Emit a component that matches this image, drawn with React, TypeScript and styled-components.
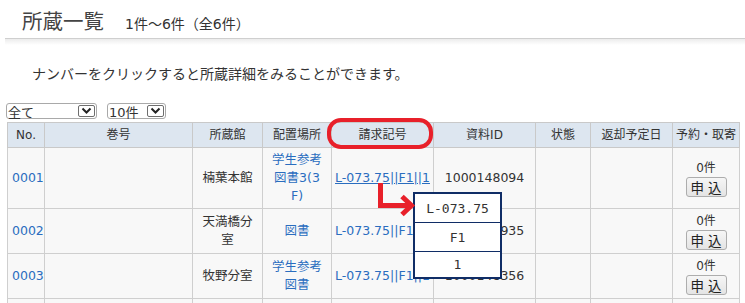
import React from 'react';
import styled, { createGlobalStyle } from 'styled-components';

const GlobalStyle = createGlobalStyle`
  html, body {
    margin: 0;
    padding: 0;
    background: #fff;
    overflow: hidden;
  }
  body {
    font-family: "DejaVu Sans", "Noto Sans CJK JP", sans-serif;
    color: #333;
  }
`;

const Page = styled.div`
  position: relative;
  width: 745px;
  height: 303px;
  overflow: hidden;
`;

const TitleBar = styled.header`
  position: relative;
  margin-left: 5px;
  height: 39px;
  padding: 7px 0 0 17px;
  border-bottom: 1px solid #cfcfcf;
  display: flex;
  align-items: baseline;
  gap: 21px;
  box-sizing: border-box;

  &::after {
    content: '';
    position: absolute;
    left: 0;
    right: 0;
    top: 39px;
    height: 6px;
    background: linear-gradient(#ececec, #fff);
  }
`;

const Title = styled.h1`
  margin: 0;
  font-family: "Noto Sans CJK JP", sans-serif;
  font-size: 20.5px;
  font-weight: 400;
  line-height: 26px;
  color: #444;
`;

const Count = styled.span`
  font-size: 14px;
  color: #333;
`;

const Note = styled.p`
  margin: 25px 0 0 32px;
  font-size: 14px;
  line-height: 20px;
`;

const Controls = styled.div`
  display: flex;
  gap: 10px;
  margin: 19px 0 0 6px;
  height: 16px;
`;

const SelectBox = styled.div<{ $w: number }>`
  width: ${(p) => p.$w}px;
  height: 16px;
  box-sizing: border-box;
  border: 1px solid #a9a9a9;
  border-radius: 3px;
  display: flex;
  align-items: center;
  justify-content: space-between;
  font-size: 13px;
  padding-left: 1px;
  background: #fff;
`;

const SelectArrow = styled.span`
  width: 17px;
  height: 12px;
  box-sizing: border-box;
  margin-right: 1px;
  border: 1px solid #6e6e6e;
  border-radius: 2px;
  display: flex;
  align-items: center;
  justify-content: center;
`;

const TableWrap = styled.div`
  margin: 3px 0 0 7px;
`;

const Table = styled.table`
  border-collapse: collapse;
  table-layout: fixed;
  width: 732px;
  font-size: 12.5px;
`;

const Th = styled.th`
  background: #dde6f0;
  border: 1px solid #c9c9c9;
  font-weight: 400;
  font-size: 12px;
  line-height: 18px;
  padding: 3px 2px;
  color: #333;
  white-space: nowrap;
`;

const Td = styled.td<{ $align?: string; $px?: number }>`
  background: #f8f8f8;
  border: 1px solid #cfcfcf;
  line-height: 18px;
  padding: 3px ${(p) => p.$px ?? 4}px;
  text-align: ${(p) => p.$align || 'center'};
  vertical-align: middle;
  word-break: break-all;
`;

const Link = styled.a<{ $under?: boolean }>`
  color: #2a6dbf;
  text-decoration: ${(p) => (p.$under ? 'underline' : 'none')};
  white-space: nowrap;
`;

const WrapLink = styled.a`
  color: #2a6dbf;
  text-decoration: none;
`;

const Reserve = styled.div`
  display: flex;
  flex-direction: column;
  align-items: center;
`;

const ReserveCount = styled.span`
  line-height: 18px;
  font-size: 12px;
`;

const ReserveButton = styled.button`
  width: 41px;
  height: 20px;
  padding: 0 0 0 4px;
  border: 1px solid #adadad;
  border-radius: 3px;
  background: linear-gradient(#f6f6f6, #e4e4e4);
  font-family: "Noto Sans CJK JP", sans-serif;
  font-size: 13.5px;
  line-height: 18px;
  letter-spacing: 4px;
  color: #222;
`;

const Popup = styled.div`
  position: absolute;
  left: 413px;
  top: 192px;
  width: 89px;
  box-sizing: border-box;
  border: 2px solid #102d66;
  background: #fff;
  display: flex;
  flex-direction: column;
`;

const PopupRow = styled.div<{ $h: number }>`
  height: ${(p) => p.$h}px;
  display: flex;
  align-items: center;
  justify-content: center;
  font-family: "DejaVu Sans Mono", monospace;
  font-size: 13px;
  color: #333;

  & + & {
    border-top: 1px solid #102d66;
  }
`;

const Annotation = styled.svg`
  position: absolute;
  left: 0;
  top: 0;
  pointer-events: none;
`;

const rows = [
  { no: '0001', lib: '楠葉本館', place: '学生参考図書3(3F)', call: 'L-073.75||F1||1', id: '1000148094', under: true },
  { no: '0002', lib: '天満橋分室', place: '図書', call: 'L-073.75||F1||1', id: '1000148935', under: false },
  { no: '0003', lib: '牧野分室', place: '学生参考図書', call: 'L-073.75||F1||1', id: '1000148356', under: false },
];

const Chevron = () => (
  <svg width="11" height="8" viewBox="0 0 11 8">
    <path d="M1.5 1.5 L5.5 5.5 L9.5 1.5" fill="none" stroke="#222" strokeWidth="2" />
  </svg>
);

export default function App() {
  return (
    <Page>
      <GlobalStyle />
      <TitleBar>
        <Title>所蔵一覧</Title>
        <Count>1件～6件（全6件）</Count>
      </TitleBar>

      <Note>ナンバーをクリックすると所蔵詳細をみることができます。</Note>

      <Controls>
        <SelectBox $w={91}>
          <span>全て</span>
          <SelectArrow><Chevron /></SelectArrow>
        </SelectBox>
        <SelectBox $w={59}>
          <span>10件</span>
          <SelectArrow><Chevron /></SelectArrow>
        </SelectBox>
      </Controls>

      <TableWrap>
        <Table>
          <colgroup>
            <col style={{ width: 37 }} />
            <col style={{ width: 148 }} />
            <col style={{ width: 70 }} />
            <col style={{ width: 69 }} />
            <col style={{ width: 102 }} />
            <col style={{ width: 102 }} />
            <col style={{ width: 55 }} />
            <col style={{ width: 82 }} />
            <col style={{ width: 67 }} />
          </colgroup>
          <thead>
            <tr>
              <Th>No.</Th>
              <Th>巻号</Th>
              <Th>所蔵館</Th>
              <Th>配置場所</Th>
              <Th>請求記号</Th>
              <Th>資料ID</Th>
              <Th>状態</Th>
              <Th>返却予定日</Th>
              <Th>予約・取寄</Th>
            </tr>
          </thead>
          <tbody>
            {rows.map((r) => (
              <tr key={r.no}>
                <Td $align="left"><Link href="#">{r.no}</Link></Td>
                <Td />
                <Td $px={7}>{r.lib}</Td>
                <Td $px={8}><WrapLink href="#">{r.place}</WrapLink></Td>
                <Td $px={2}><Link href="#" $under={r.under}>{r.call}</Link></Td>
                <Td>{r.id}</Td>
                <Td />
                <Td />
                <Td>
                  <Reserve>
                    <ReserveCount>0件</ReserveCount>
                    <ReserveButton>申込</ReserveButton>
                  </Reserve>
                </Td>
              </tr>
            ))}
            <tr>
              {Array.from({ length: 9 }, (_, i) => (
                <Td key={i}>&nbsp;</Td>
              ))}
            </tr>
          </tbody>
        </Table>
      </TableWrap>

      <Popup>
        <PopupRow $h={28}>L-073.75</PopupRow>
        <PopupRow $h={28}>F1</PopupRow>
        <PopupRow $h={25}>1</PopupRow>
      </Popup>

      <Annotation width="745" height="303" viewBox="0 0 745 303">
        <rect x="329" y="120" width="102" height="27" rx="12" fill="none" stroke="#e8202a" strokeWidth="4" />
        <path d="M380.5 183 V205.5 H411" fill="none" stroke="#e8202a" strokeWidth="5" />
        <path d="M402 196.5 L411.5 205.5 L402 214.5" fill="none" stroke="#e8202a" strokeWidth="5" />
      </Annotation>
    </Page>
  );
}
